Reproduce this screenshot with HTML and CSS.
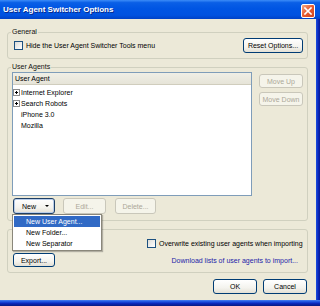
FILE: index.html
```html
<!DOCTYPE html>
<html lang="en">

<head>
    <meta charset="utf-8">
    <title>User Agent Switcher Options</title>
    <link rel="stylesheet" href="styles.css">
</head>

<body>
    <div class="window">
        <div class="titlebar">
            <span class="title">User Agent Switcher Options</span>
            <span class="close">
                <svg width="8" height="8" viewBox="0 0 8 8">
                    <path d="M1 1 L7 7 M7 1 L1 7" stroke="#fff" stroke-width="1.6" stroke-linecap="square" />
                </svg>
            </span>
        </div>
        <div class="frame">
            <div class="content">
                <fieldset class="group general">
                    <legend>General</legend>
                    <div class="row">
                        <label class="check"><span class="box"></span>Hide the User Agent Switcher Tools menu</label>
                        <button class="btn reset">Reset Options...</button>
                    </div>
                </fieldset>

                <fieldset class="group agents">
                    <legend>User Agents</legend>
                    <div class="agents-main">
                        <div class="list">
                            <div class="list-head">User Agent</div>
                            <div class="item"><span class="twisty plus"></span>Internet Explorer</div>
                            <div class="item"><span class="twisty plus"></span>Search Robots</div>
                            <div class="item"><span class="twisty"></span>iPhone 3.0</div>
                            <div class="item"><span class="twisty"></span>Mozilla</div>
                        </div>
                        <div class="side">
                            <button class="btn side-btn" disabled>Move Up</button>
                            <button class="btn side-btn" disabled>Move Down</button>
                        </div>
                    </div>
                    <div class="actions">
                        <div class="dropdown">
                            <button class="btn focused new">New <span class="arrow"></span></button>
                            <div class="menu">
                                <div class="menu-item active">New User Agent...</div>
                                <div class="menu-item">New Folder...</div>
                                <div class="menu-item">New Separator</div>
                            </div>
                        </div>
                        <button class="btn edit" disabled>Edit...</button>
                        <button class="btn delete" disabled>Delete...</button>
                    </div>
                </fieldset>

                <fieldset class="group import">
                    <div class="row overwrite">
                        <label class="check"><span class="box"></span>Overwrite existing user agents when importing</label>
                    </div>
                    <div class="row">
                        <button class="btn export">Export...</button>
                        <a class="link">Download lists of user agents to import...</a>
                    </div>
                </fieldset>

                <div class="dialog-buttons">
                    <button class="btn dlg">OK</button>
                    <button class="btn dlg">Cancel</button>
                </div>
            </div>
            <div class="edge-right"></div>
        </div>
        <div class="edge-bottom"></div>
    </div>
</body>

</html>
```

FILE: styles.css
```css
body {
    margin: 0;
    padding: 0;
    overflow: hidden;
    background: #ece9d8;
}

.window {
    width: 320px;
    height: 306px;
    display: flex;
    flex-direction: column;
    font-family: "Liberation Sans", Arial, sans-serif;
    font-size: 7px;
    color: #000;
}

/* title bar */
.titlebar {
    height: 19px;
    flex: 0 0 19px;
    display: flex;
    align-items: center;
    justify-content: space-between;
    padding: 0 5px 0 3px;
    background: linear-gradient(#3c8cf8 0%, #0a5fe6 14%, #0055e3 45%, #0052e0 80%, #0042c6 100%);
    box-sizing: border-box;
}

.title {
    color: #fff;
    font-weight: bold;
    font-size: 8px;
    text-shadow: 1px 1px 0 #0a2a8a;
}

.close {
    width: 14px;
    height: 14px;
    margin-top: 2px;
    box-sizing: border-box;
    border: 1px solid #fff;
    border-radius: 2px;
    background: linear-gradient(135deg, #f4a884 0%, #e65a30 50%, #cc4620 100%);
    display: flex;
    align-items: center;
    justify-content: center;
}

.frame {
    flex: 1;
    display: flex;
}

.content {
    flex: 1;
    display: flex;
    flex-direction: column;
    padding: 0 8px 0 7px;
}

.edge-right {
    width: 4px;
    background: linear-gradient(90deg, #1a4fe0, #0a25b8 60%, #061a90);
}

.edge-bottom {
    height: 6px;
    flex: 0 0 6px;
    background: linear-gradient(#4a82f0 0%, #1a4fe0 30%, #0a25b8 60%, #061a80 100%);
}

/* group boxes */
.group {
    margin: 0;
    border: 1px solid #d0d0bf;
    border-radius: 3px;
    min-width: 0;
}

.group legend {
    padding: 0 1px;
    font-size: 7px;
    line-height: 8px;
    color: #111;
}

.general {
    margin-top: 9px;
    padding: 2px 4px 5px 6px;
}

.general legend {
    margin-left: -3px;
}

.agents {
    margin-top: 4px;
    padding: 1px 4px 6px 4px;
}

.agents legend {
    margin-left: -1px;
}

.import {
    margin-top: 8px;
    padding: 6px 4px 5px 5px;
}

.row {
    display: flex;
    align-items: center;
    justify-content: space-between;
}

.check {
    display: flex;
    align-items: center;
    white-space: nowrap;
}

.box {
    width: 9px;
    height: 9px;
    box-sizing: border-box;
    border: 1px solid #1c5180;
    background: linear-gradient(135deg, #dcdcd7, #fff);
    margin-right: 3px;
}

/* buttons */
.btn {
    font-family: inherit;
    font-size: 7px;
    color: #000;
    padding: 0;
    height: 15px;
    box-sizing: border-box;
    border: 1px solid #003c74;
    border-radius: 3px;
    background: linear-gradient(#ffffff, #f4f3ee 60%, #e3e0d5);
}

.btn:disabled {
    color: #aca899;
    border-color: #c9c7ba;
    background: #f5f4ea;
}

.reset {
    width: 60px;
}

/* list */
.agents-main {
    display: flex;
    gap: 7px;
}

.list {
    width: 240px;
    height: 124px;
    box-sizing: border-box;
    border: 1px solid #7f9db9;
    background: #fff;
}

.list-head {
    height: 11px;
    line-height: 11px;
    padding-left: 2px;
    background: linear-gradient(#f0efe6, #e6e4d8);
    border-bottom: 1px solid #d0cdbd;
    margin-bottom: 2px;
}

.item {
    height: 11px;
    display: flex;
    align-items: center;
}

.twisty {
    width: 7px;
    height: 7px;
    margin-right: 1px;
    box-sizing: border-box;
}

.twisty.plus {
    border: 1px solid #8c8c8c;
    background:
        linear-gradient(#000, #000) center / 3px 1px no-repeat,
        linear-gradient(#000, #000) center / 1px 3px no-repeat,
        #fff;
}

.side {
    display: flex;
    flex-direction: column;
    gap: 4px;
    padding-top: 2px;
}

.side-btn {
    width: 44px;
    height: 14px;
}

.actions {
    display: flex;
    margin-top: 2px;
    padding-left: 1px;
}

.actions .btn {
    height: 16px;
}

.dropdown {
    position: relative;
}

.new {
    width: 42px;
    display: flex;
    align-items: center;
    padding-left: 8px;
}

.focused {
    border-color: #1d3f66;
    box-shadow: inset 0 0 0 1px #b9cde9;
}

.arrow {
    margin-left: 9px;
    border-left: 2px solid transparent;
    border-right: 2px solid transparent;
    border-top: 2px solid #000;
}

.edit {
    width: 43px;
    margin-left: 8px;
}

.delete {
    width: 41px;
    margin-left: 9px;
}

/* popup menu */
.menu {
    position: absolute;
    top: 16px;
    left: -1px;
    width: 90px;
    box-sizing: border-box;
    padding: 1px 1px;
    border: 1px solid #8a877b;
    background: #fff;
    z-index: 5;
    box-shadow: 1px 1px 1px rgba(0, 0, 0, 0.25);
}

.menu-item {
    height: 11px;
    line-height: 11px;
    padding-left: 12px;
}

.menu-item.active {
    background: #316ac5;
    color: #fff;
}

/* import / export */
.overwrite {
    padding-left: 134px;
    height: 14px;
}

.overwrite + .row {
    margin-top: 3px;
}

.export {
    width: 42px;
    height: 14px;
}

.link {
    color: #1c1ca8;
    margin-right: 5px;
    margin-top: 1px;
}

.dialog-buttons {
    display: flex;
    justify-content: flex-end;
    gap: 6px;
    margin-top: 6px;
    padding-right: 1px;
}

.dlg {
    width: 44px;
}
```
